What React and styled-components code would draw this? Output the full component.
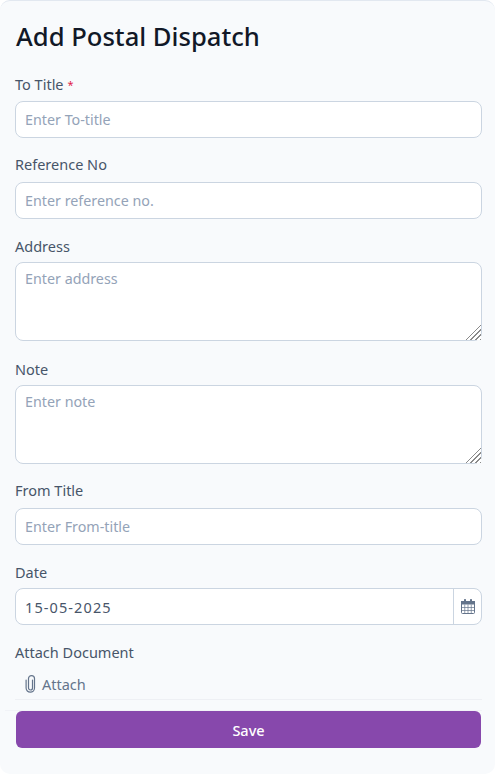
import React from "react";
import styled, { createGlobalStyle } from "styled-components";

const Global = createGlobalStyle`
  html, body { margin: 0; padding: 0; background: #fff; }
  * { box-sizing: border-box; }
  body { font-family: "Noto Sans", "Open Sans", sans-serif; }
`;

const Card = styled.form`
  width: 495px;
  height: 774px;
  background: #f8fafc;
  border-top: 1px solid #e2e8f0;
  border-radius: 10px;
  padding: 0 13px 0 15px;
  display: flex;
  flex-direction: column;
  overflow: hidden;
`;

const Title = styled.h1`
  margin: 18px 0 0 1px;
  font-size: 25.6px;
  line-height: 36px;
  font-weight: 500;
  color: #111827;
`;

const Field = styled.div`
  display: flex;
  flex-direction: column;
  margin-top: ${(p) => p.$top}px;
`;

const Label = styled.label`
  font-size: 14.5px;
  line-height: 20px;
  color: #475569;
  margin-bottom: ${(p) => p.$gap ?? 6}px;
`;

const Required = styled.span`
  color: #e11d48;
  font-size: 11px;
  margin-left: 4px;
  vertical-align: 1px;
`;

const Input = styled.input`
  width: 100%;
  height: 37px;
  border: 1px solid #cbd5e1;
  border-radius: 8px;
  background: #fff;
  padding: 0 9px;
  font: inherit;
  font-size: 14.3px;
  color: #475569;
  outline: none;
  &::placeholder { color: #94a3b8; opacity: 1; }
`;

const TextArea = styled.textarea`
  display: block;
  width: 100%;
  height: 79px;
  border: 1px solid #cbd5e1;
  border-radius: 8px;
  background: #fff;
  padding: 6px 9px;
  font: inherit;
  font-size: 14.3px;
  line-height: 20px;
  color: #475569;
  outline: none;
  resize: vertical;
  &::placeholder { color: #94a3b8; opacity: 1; }
  &::-webkit-resizer {
    background:
      linear-gradient(135deg, #fff 50%, transparent 50%),
      repeating-linear-gradient(135deg, #8a8a8a 0 1.2px, #fff 1.2px 3.3px);
  }
`;

const DateGroup = styled.div`
  display: flex;
  height: 37px;
  border: 1px solid #cbd5e1;
  border-radius: 8px;
  background: #fff;
  overflow: hidden;
`;

const DateInput = styled.input`
  flex: 1;
  min-width: 0;
  border: 0;
  padding: 0 9px;
  background: transparent;
  font: inherit;
  font-size: 14.5px;
  letter-spacing: 1.1px;
  color: #475569;
  outline: none;
`;

const DateAddon = styled.span`
  width: 28px;
  display: flex;
  align-items: center;
  justify-content: center;
  border-left: 1px solid #cbd5e1;
`;

const AttachRow = styled.div`
  display: flex;
  align-items: center;
  height: 36px;
  padding: 5px 0 0 10px;
  border-bottom: 1px solid #eef0f4;
  color: #64748b;
  font-size: 14.5px;
`;

const ClipSvg = styled.svg`
  margin-right: 6px;
  flex: none;
`;

const SaveBar = styled.div`
  margin: 10px 0 0 -10px;
  padding: 0 0 0 11px;
  border-top: 1px solid #f1f3f7;
  width: 477px;
`;

const SaveButton = styled.button`
  display: block;
  width: 465px;
  height: 37px;
  border: 0;
  border-radius: 6px;
  background: #8748ac;
  color: #fff;
  font: inherit;
  font-size: 14.5px;
  font-weight: 500;
`;

const CalendarIcon = () => (
  <svg width="14" height="15" viewBox="0 0 14 15" aria-hidden="true">
    <rect x="0.5" y="2.5" width="13" height="12" rx="1" fill="#fff" stroke="#64748b" />
    <rect x="0" y="2" width="14" height="3.5" fill="#64748b" />
    <rect x="3" y="0" width="2" height="3.5" rx="0.8" fill="#64748b" />
    <rect x="9" y="0" width="2" height="3.5" rx="0.8" fill="#64748b" />
    <path d="M3.75 5.5v9M7 5.5v9M10.25 5.5v9M0.5 8.5h13M0.5 11.5h13" stroke="#64748b" strokeWidth="0.7" fill="none" />
  </svg>
);

const ClipIcon = () => (
  <ClipSvg width="11" height="18" viewBox="0 0 11 18" aria-hidden="true">
    <path
      d="M7.5 5v8a2 2 0 0 1-4 0V3.6a3 3 0 0 1 6 0V13a4.2 4.2 0 0 1-8.4 0V5"
      fill="none"
      stroke="#64748b"
      strokeWidth="1.2"
      strokeLinecap="round"
    />
  </ClipSvg>
);

export default function App() {
  return (
    <>
      <Global />
      <Card>
        <Title>Add Postal Dispatch</Title>
        <Field $top={19}>
          <Label>To Title<Required>*</Required></Label>
          <Input placeholder="Enter To-title" />
        </Field>
        <Field $top={16}>
          <Label $gap={8}>Reference No</Label>
          <Input placeholder="Enter reference no." />
        </Field>
        <Field $top={17}>
          <Label>Address</Label>
          <TextArea placeholder="Enter address" />
        </Field>
        <Field $top={18}>
          <Label>Note</Label>
          <TextArea placeholder="Enter note" />
        </Field>
        <Field $top={16}>
          <Label $gap={8}>From Title</Label>
          <Input placeholder="Enter From-title" />
        </Field>
        <Field $top={17}>
          <Label>Date</Label>
          <DateGroup>
            <DateInput defaultValue="15-05-2025" />
            <DateAddon><CalendarIcon /></DateAddon>
          </DateGroup>
        </Field>
        <Field $top={17}>
          <Label $gap={2}>Attach Document</Label>
          <AttachRow><ClipIcon />Attach</AttachRow>
        </Field>
        <SaveBar>
          <SaveButton type="button">Save</SaveButton>
        </SaveBar>
      </Card>
    </>
  );
}
